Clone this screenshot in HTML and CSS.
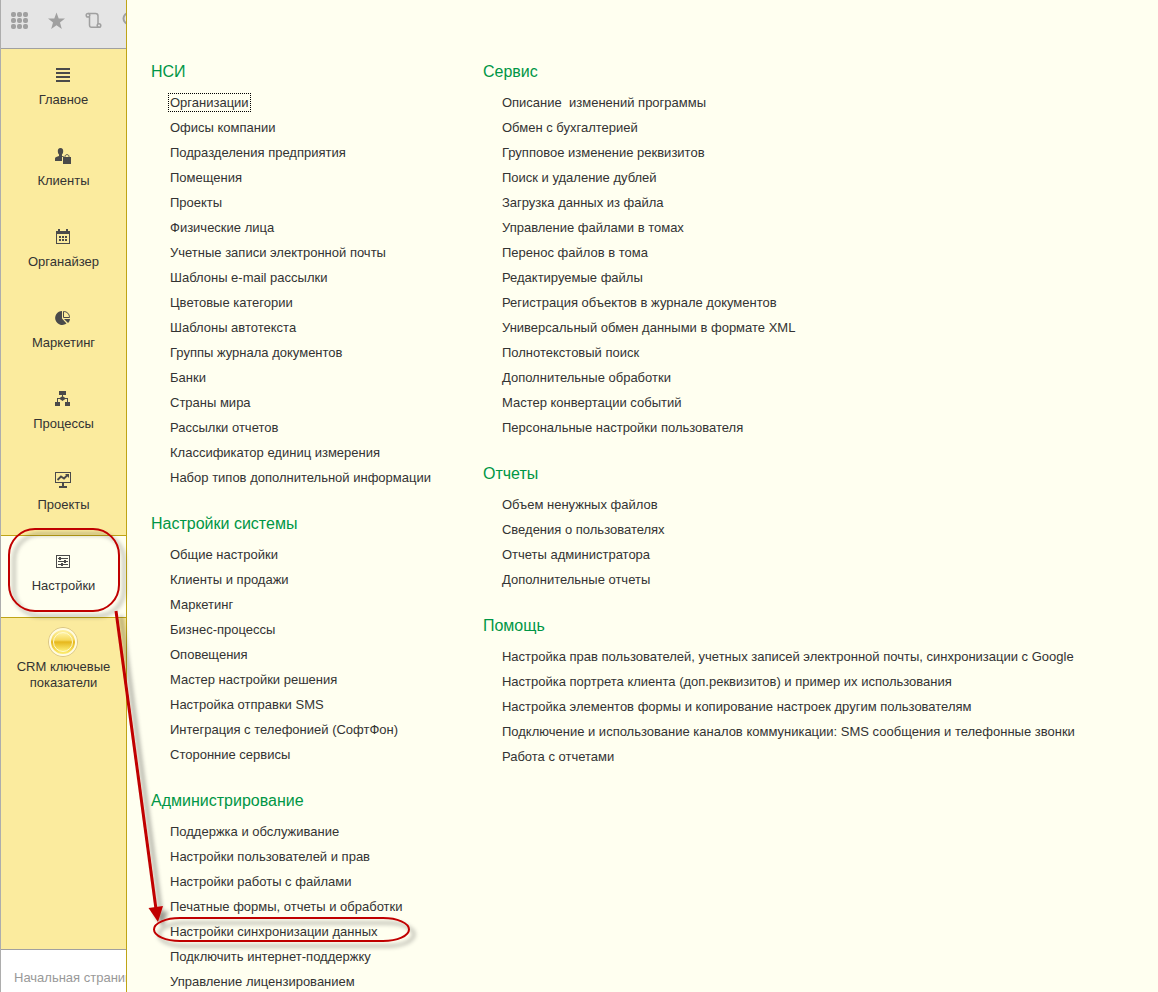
FILE: index.html
```html
<!DOCTYPE html>
<html lang="ru">
<head>
<meta charset="utf-8">
<title>Настройки</title>
<link rel="stylesheet" href="styles.css">
</head>
<body>
<div class="app">
  <aside class="sidebar">
    <div class="toolbar">
      <button class="tool" type="button" aria-label="Разделы"><svg width="18" height="18" viewBox="0 0 18 18" fill="#a0a0a0"><rect x="0" y="0" width="5" height="5" rx="2"/><rect x="6" y="0" width="5" height="5" rx="2"/><rect x="12" y="0" width="5" height="5" rx="2"/><rect x="0" y="6" width="5" height="5" rx="2"/><rect x="6" y="6" width="5" height="5" rx="2"/><rect x="12" y="6" width="5" height="5" rx="2"/><rect x="0" y="12" width="5" height="5" rx="2"/><rect x="6" y="12" width="5" height="5" rx="2"/><rect x="12" y="12" width="5" height="5" rx="2"/></svg></button>
      <button class="tool" type="button" aria-label="Избранное"><svg width="18" height="18" viewBox="0 0 18 18" fill="#a0a0a0"><path d="M8.500 0.500L10.700 6.500H17L12 10.500L13.800 17L8.500 13.200L3.200 17L5 10.500L0 6.500H6.300Z"/></svg></button>
      <button class="tool" type="button" aria-label="История"><svg width="18" height="18" viewBox="0 0 18 18" fill="none" stroke="#a0a0a0" stroke-width="1.500"><path d="M3 1.500H10.500C12.500 1.500 13 2.500 13 4V12M4.500 5V13C4.500 14.800 5.500 15.300 6.500 15.300H14"/><circle cx="3" cy="3.300" r="1.800"/><circle cx="14" cy="13.500" r="1.800"/></svg></button>
      <button class="tool" type="button" aria-label="Поиск"><svg width="18" height="18" viewBox="0 0 18 18" fill="none" stroke="#a0a0a0" stroke-width="2"><circle cx="7" cy="6.500" r="5.500"/><path d="M11 11L16 16"/></svg></button>
    </div>
    <nav class="sections">
      <a class="section" href="#main"><span class="icon"><svg width="16" height="16" viewBox="0 0 16 16" fill="#4a4a4a"><path d="M1 1h14v2H1zM1 5h14v2H1zM1 9h14v2H1zM1 13h14v2H1z"/></svg></span><span>Главное</span></a>
      <a class="section" href="#clients"><span class="icon"><svg width="16" height="16" viewBox="0 0 16 16" fill="#4a4a4a"><path d="M5.500 0C7.500 0 8.300 1.300 8.200 3.200C8.100 5 7.500 6 7 6.600V8L9 8.500V9H7V13H0V10.500C0 9 2 8.500 4 8V6.600C3.500 6 2.900 5 2.800 3.200C2.700 1.300 3.500 0 5.500 0ZM8 9H16V16H8Z"/><path d="M10 9.500V8.500C10 6 14 6 14 8.500V9.500" fill="none" stroke="#4a4a4a"/></svg></span><span>Клиенты</span></a>
      <a class="section" href="#organizer"><span class="icon"><svg width="16" height="16" viewBox="0 0 16 16" fill="#4a4a4a"><path fill-rule="evenodd" d="M1 2H3V0H5V2H11V0H13V2H15V15H1ZM2 5V14H14V5Z"/><path d="M4 7h2v2H4zM7 7h2v2H7zM10 7h2v2h-2zM4 10h2v2H4zM7 10h2v2H7zM10 10h2v2h-2z"/></svg></span><span>Органайзер</span></a>
      <a class="section" href="#marketing"><span class="icon"><svg width="16" height="16" viewBox="0 0 16 16" fill="#4a4a4a"><path d="M7 1V8.500L11.500 13.500A7 7 0 1 1 7 1Z"/><path d="M8.500 1.500V7.500H14.500C14.500 4 12 1.500 8.500 1.500Z" fill="none" stroke="#4a4a4a"/><path d="M9 9H15C15 10.500 14 12 13 13Z"/></svg></span><span>Маркетинг</span></a>
      <a class="section" href="#processes"><span class="icon"><svg width="16" height="16" viewBox="0 0 16 16" fill="#4a4a4a"><path d="M4 0h7v4H4zM7 4h1v2H7zM7.500 5L11 7.500L7.500 10L4 7.500ZM2 7h11v1H2zM2 7h1v4H2zM12 7h1v4h-1zM0 11h5v4H0zM10 11h5v4h-5z"/></svg></span><span>Процессы</span></a>
      <a class="section" href="#projects"><span class="icon"><svg width="16" height="16" viewBox="0 0 16 16" fill="#4a4a4a"><path fill-rule="evenodd" d="M0 0H16V11H0ZM1 1V10H15V1ZM7 11H9V14H12V16H4V14H7Z"/><path d="M2.500 8L6 4.500L9 6.500L12.500 3" fill="none" stroke="#4a4a4a" stroke-width="1.800"/><path d="M10 2h4v4z"/></svg></span><span>Проекты</span></a>
      <a class="section section--active" href="#settings" aria-current="page"><span class="icon"><svg width="16" height="16" viewBox="0 -1 16 16" fill="#4a4a4a"><path fill-rule="evenodd" d="M1 1H15V14H1ZM2 2V13H14V2Z"/><path d="M3 4h10v1H3zM3 7h10v1H3zM3 10h10v1H3zM4 3h2v3H4zM9 6h2v3H9zM6 9h2v3H6z"/></svg></span><span>Настройки</span></a>
      <a class="section" href="#crm"><span class="icon"><svg width="32" height="32" viewBox="0 0 32 32"><defs><linearGradient id="gold" x1="0" y1="0" x2="0" y2="1"><stop offset="0" stop-color="#fff3a8"/><stop offset=".4" stop-color="#f6d95c"/><stop offset=".5" stop-color="#e6b71c"/><stop offset="1" stop-color="#fff27a"/></linearGradient></defs><circle cx="16" cy="16" r="14.500" fill="#f4dc72" stroke="#d8c48a"/><circle cx="16" cy="16" r="13" fill="url(#gold)" stroke="#fffbe0" stroke-width="2"/><circle cx="16" cy="16" r="9.500" fill="url(#gold)" stroke="#fffad0"/></svg></span><span>CRM ключевые показатели</span></a>
    </nav>
    <div class="tabbar"><a href="#home">Начальная страница</a></div>
  </aside>
  <main class="content">
    <div class="column">
      <section class="group"><h2>НСИ</h2><ul>
        <li><a class="focused" href="#">Организации</a></li><li><a href="#">Офисы компании</a></li><li><a href="#">Подразделения предприятия</a></li><li><a href="#">Помещения</a></li><li><a href="#">Проекты</a></li><li><a href="#">Физические лица</a></li><li><a href="#">Учетные записи электронной почты</a></li><li><a href="#">Шаблоны e-mail рассылки</a></li><li><a href="#">Цветовые категории</a></li><li><a href="#">Шаблоны автотекста</a></li><li><a href="#">Группы журнала документов</a></li><li><a href="#">Банки</a></li><li><a href="#">Страны мира</a></li><li><a href="#">Рассылки отчетов</a></li><li><a href="#">Классификатор единиц измерения</a></li><li><a href="#">Набор типов дополнительной информации</a></li>
      </ul></section>
      <section class="group"><h2>Настройки системы</h2><ul>
        <li><a href="#">Общие настройки</a></li><li><a href="#">Клиенты и продажи</a></li><li><a href="#">Маркетинг</a></li><li><a href="#">Бизнес-процессы</a></li><li><a href="#">Оповещения</a></li><li><a href="#">Мастер настройки решения</a></li><li><a href="#">Настройка отправки SMS</a></li><li><a href="#">Интеграция с телефонией (СофтФон)</a></li><li><a href="#">Сторонние сервисы</a></li>
      </ul></section>
      <section class="group"><h2>Администрирование</h2><ul>
        <li><a href="#">Поддержка и обслуживание</a></li><li><a href="#">Настройки пользователей и прав</a></li><li><a href="#">Настройки работы с файлами</a></li><li><a href="#">Печатные формы, отчеты и обработки</a></li><li><a href="#">Настройки синхронизации данных</a></li><li><a href="#">Подключить интернет-поддержку</a></li><li><a href="#">Управление лицензированием</a></li>
      </ul></section>
    </div>
    <div class="column">
      <section class="group"><h2>Сервис</h2><ul>
        <li><a href="#">Описание&nbsp; изменений программы</a></li><li><a href="#">Обмен с бухгалтерией</a></li><li><a href="#">Групповое изменение реквизитов</a></li><li><a href="#">Поиск и удаление дублей</a></li><li><a href="#">Загрузка данных из файла</a></li><li><a href="#">Управление файлами в томах</a></li><li><a href="#">Перенос файлов в тома</a></li><li><a href="#">Редактируемые файлы</a></li><li><a href="#">Регистрация объектов в журнале документов</a></li><li><a href="#">Универсальный обмен данными в формате XML</a></li><li><a href="#">Полнотекстовый поиск</a></li><li><a href="#">Дополнительные обработки</a></li><li><a href="#">Мастер конвертации событий</a></li><li><a href="#">Персональные настройки пользователя</a></li>
      </ul></section>
      <section class="group"><h2>Отчеты</h2><ul>
        <li><a href="#">Объем ненужных файлов</a></li><li><a href="#">Сведения о пользователях</a></li><li><a href="#">Отчеты администратора</a></li><li><a href="#">Дополнительные отчеты</a></li>
      </ul></section>
      <section class="group"><h2>Помощь</h2><ul>
        <li><a href="#">Настройка прав пользователей, учетных записей электронной почты, синхронизации с Google</a></li><li><a href="#">Настройка портрета клиента (доп.реквизитов) и пример их использования</a></li><li><a href="#">Настройка элементов формы и копирование настроек другим пользователям</a></li><li><a href="#">Подключение и использование каналов коммуникации: SMS сообщения и телефонные звонки</a></li><li><a href="#">Работа с отчетами</a></li>
      </ul></section>
    </div>
  </main>
  <svg class="callouts" width="430" height="960" viewBox="0 0 430 960" aria-hidden="true">
    <defs><filter id="shadow" x="-20%" y="-20%" width="140%" height="150%"><feDropShadow dx="5" dy="5" stdDeviation="2" flood-color="#000" flood-opacity=".4"/></filter></defs>
    <g filter="url(#shadow)">
      <rect x="9" y="529" width="110" height="82" rx="26" fill="none" stroke="#c00000" stroke-width="2"/>
      <rect x="154" y="918" width="255" height="23" rx="26" ry="12" fill="none" stroke="#c00000" stroke-width="2"/>
      <path d="M116 611L156 909" stroke="#c00000" stroke-width="3"/>
      <path d="M148.500 908L163 906L158 922Z" fill="#c00000"/>
    </g>
  </svg>
</div>
</body>
</html>
```
FILE: styles.css
```css
* { box-sizing: border-box; }

body {
  margin: 0;
  font: 13px/16px "Liberation Sans", Arial, sans-serif;
  color: #333;
  background: #fffff0;
}

a { color: inherit; text-decoration: none; }

.app {
  position: relative;
  display: flex;
  height: 100vh;
  overflow: hidden;
}

.sidebar {
  display: flex;
  flex-direction: column;
  flex: none;
  width: 127px;
  overflow: hidden;
  border-left: 1px solid #adadad;
  border-right: 1px solid #bfa416;
  background: #fbeb9e;
}

.toolbar {
  display: flex;
  gap: 19px;
  flex: none;
  height: 49px;
  padding: 12px 0 0 10px;
  background: #e5e5e5;
  border-bottom: 1px solid #a0a0a0;
}

.tool {
  flex: none;
  width: 18px;
  height: 18px;
  padding: 0;
  border: 0;
  background: none;
}

.tool svg { display: block; }

.sections { flex: 1; }

.section {
  display: block;
  height: 81px;
  padding: 10px 12px 0;
  text-align: center;
}

.section--active {
  height: 83px;
  margin-bottom: -2px;
  background: #fffff0;
  border-top: 1px solid #bfa416;
  border-bottom: 1px solid #bfa416;
  padding-top: 9px;
}

.icon {
  display: flex;
  align-items: center;
  justify-content: center;
  height: 32px;
  margin-bottom: 1px;
  padding-right: 1px;
}

.tabbar {
  flex: none;
  height: 43px;
  padding: 20px 0 0 13px;
  border-top: 1px solid #a0a0a0;
  background: #fff;
  color: #999;
  white-space: nowrap;
}

.content {
  display: flex;
  gap: 52px;
  flex: 1;
  min-width: 0;
  padding: 62px 24px 0;
}

.group { margin-bottom: 24px; }

.group h2 {
  margin: 0 0 8px;
  font-size: 16px;
  line-height: 20px;
  font-weight: 400;
  color: #009646;
}

.group ul {
  margin: 0;
  padding: 0 0 0 19px;
  list-style: none;
}

.group li {
  height: 25px;
  line-height: 25px;
  white-space: nowrap;
}

.focused {
  outline: 1px dotted #000;
  outline-offset: 1px;
}

.callouts {
  position: absolute;
  top: 0;
  left: 0;
  pointer-events: none;
}
```
